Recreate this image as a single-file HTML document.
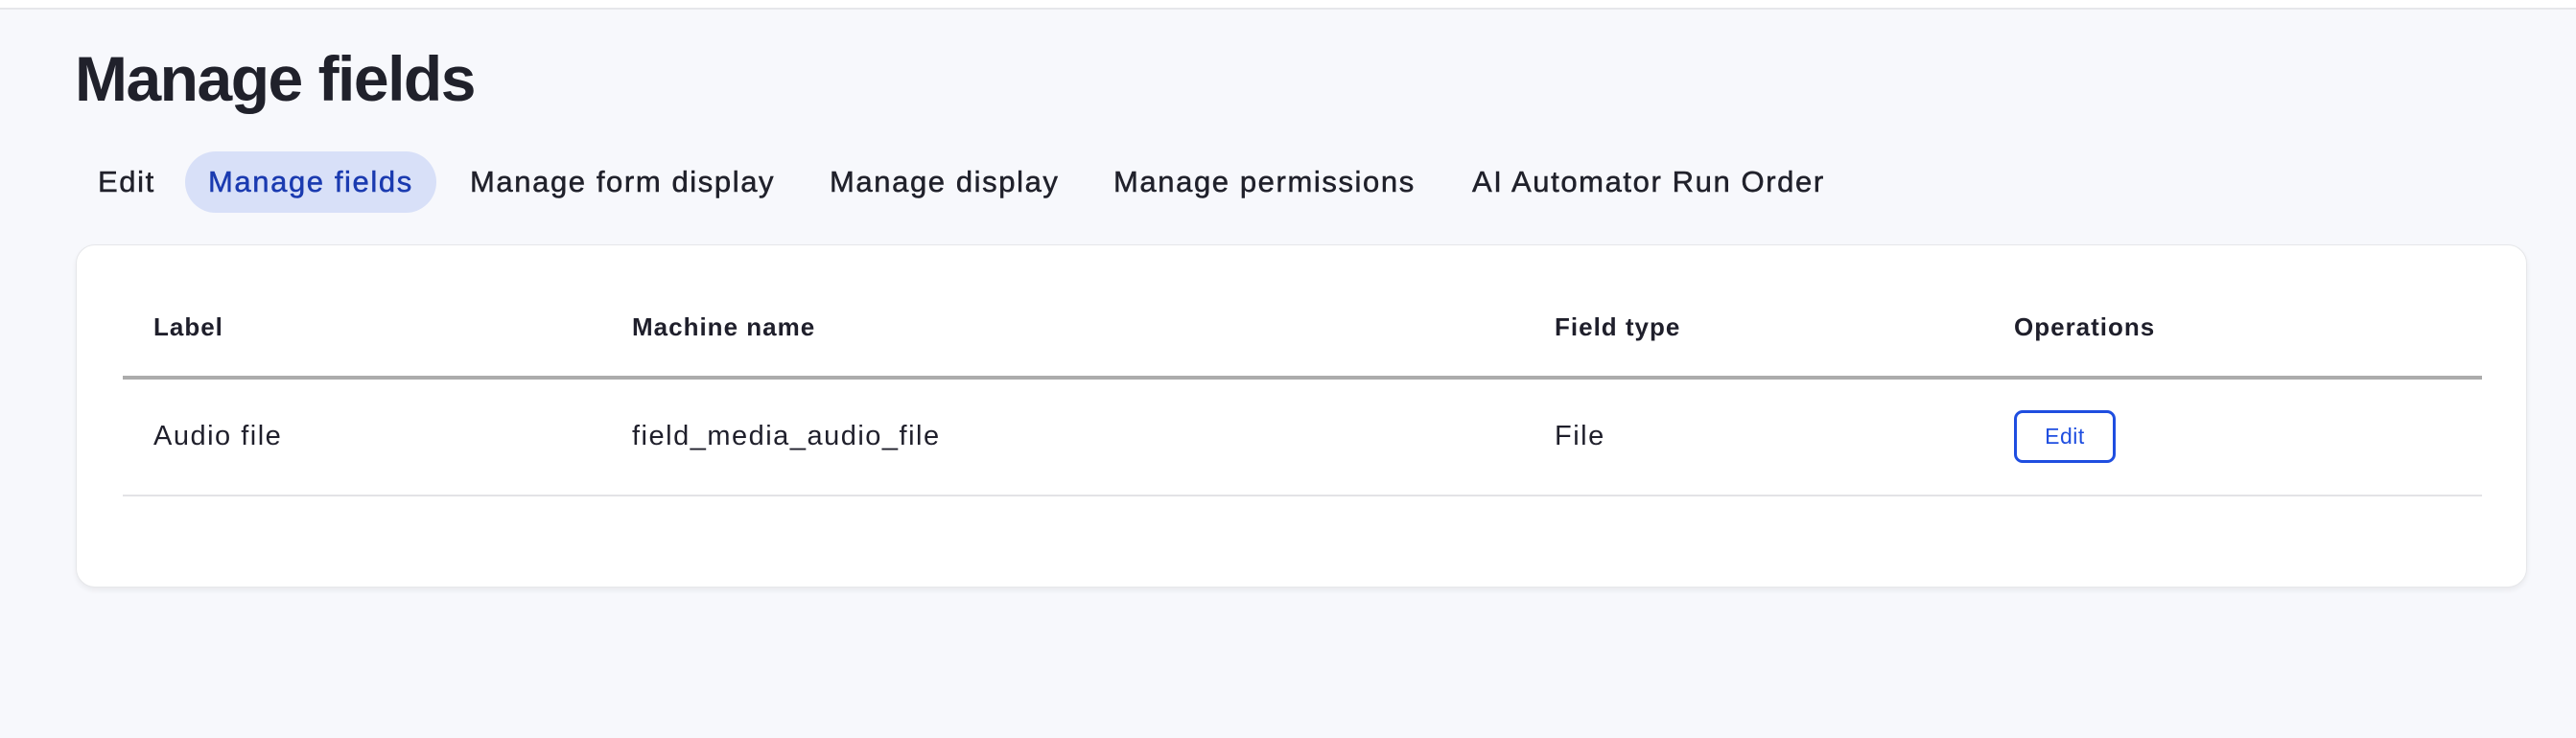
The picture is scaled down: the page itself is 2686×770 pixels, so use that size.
<!DOCTYPE html>
<html><head><meta charset="utf-8"><style>
html,body{margin:0;padding:0;}
body{width:2686px;height:770px;background:#f7f8fc;position:relative;overflow:hidden;font-family:"Liberation Sans",Arial,sans-serif;color:#1f1f2b;}
.top{position:absolute;left:0;top:0;width:2686px;height:8px;background:#fff;border-bottom:2px solid #e6e7ea;}
h1{position:absolute;left:78px;top:44px;margin:0;font-size:66px;font-weight:bold;letter-spacing:-1.5px;color:#20212b;}
.tab{position:absolute;top:158px;height:64px;line-height:64px;font-size:31px;color:#20212b;white-space:nowrap;letter-spacing:1.6px;-webkit-text-stroke:0.5px currentColor;}
.tab.act{background:#d8e0f8;color:#1a3ab0;border-radius:32px;padding:0 24px;}
.card{position:absolute;left:79px;top:255px;width:2556px;height:358px;background:#fff;border:1px solid #e6e7ea;border-radius:20px;box-sizing:border-box;box-shadow:0 3px 6px rgba(0,0,0,0.06);}
.t{position:absolute;white-space:nowrap;}
.th{font-weight:bold;font-size:26px;top:326px;letter-spacing:1px;}
.td{font-size:29px;top:439px;letter-spacing:1.5px;}
.l1{position:absolute;left:128px;width:2460px;top:392px;height:4px;background:#acacac;}
.l2{position:absolute;left:128px;width:2460px;top:516px;height:2px;background:#e3e3e6;}
.btn{position:absolute;left:2100px;top:428px;width:106px;height:55px;box-sizing:border-box;border:3px solid #1f4ee0;border-radius:9px;color:#1f4ee0;font-size:23px;text-align:center;line-height:49px;letter-spacing:0.5px;}
</style></head><body>
<div class="top"></div>
<h1>Manage fields</h1>
<div class="tab" style="left:102px">Edit</div>
<div class="tab act" style="left:193px">Manage fields</div>
<div class="tab" style="left:490px">Manage form display</div>
<div class="tab" style="left:865px">Manage display</div>
<div class="tab" style="left:1161px">Manage permissions</div>
<div class="tab" style="left:1535px">AI Automator Run Order</div>
<div class="card"></div>
<div class="t th" style="left:160px">Label</div>
<div class="t th" style="left:659px">Machine name</div>
<div class="t th" style="left:1621px">Field type</div>
<div class="t th" style="left:2100px">Operations</div>
<div class="l1"></div>
<div class="t td" style="left:160px">Audio file</div>
<div class="t td" style="left:659px">field_media_audio_file</div>
<div class="t td" style="left:1621px">File</div>
<div class="btn">Edit</div>
<div class="l2"></div>
</body></html>
